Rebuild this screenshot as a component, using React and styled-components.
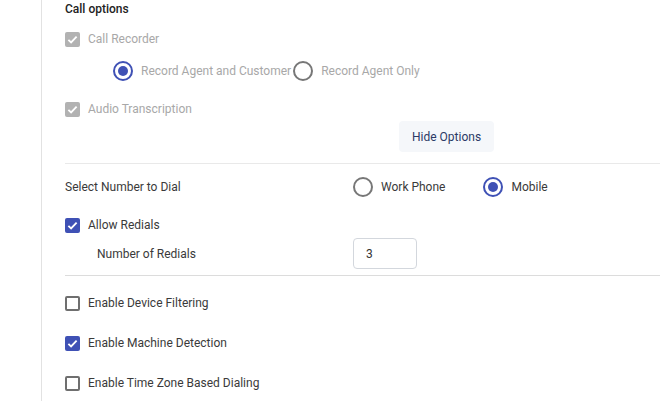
import React from 'react';
import styled, { createGlobalStyle } from 'styled-components';

const Global = createGlobalStyle`
  html, body {
    margin: 0;
    padding: 0;
    background: #fff;
    font-family: Roboto, "Liberation Sans", Arial, sans-serif;
    font-size: 12px;
    color: #333;
  }
`;

const Page = styled.div`
  padding-left: 41px;
  height: 401px;
  overflow: hidden;
`;

const Panel = styled.div`
  border-left: 1px solid #e2e2e2;
  padding-left: 23px;
  height: 100%;
  display: flex;
  flex-direction: column;
`;

const Title = styled.div`
  height: 18px;
  display: flex;
  align-items: center;
  font-weight: 500;
  color: #222;
`;

const Row = styled.div`
  display: flex;
  align-items: center;
  height: ${p => p.$h || 20}px;
  margin-top: ${p => p.$mt || 0}px;
  padding-left: ${p => p.$indent || 0}px;
`;

const Grid = styled.div`
  display: grid;
  grid-template-columns: 288px 1fr;
  align-items: center;
  height: ${p => p.$h || 24}px;
  margin-top: ${p => p.$mt || 0}px;
`;

const Label = styled.span`
  color: ${p => (p.$disabled ? '#a8a8a8' : '#3a3a3a')};
  padding-left: ${p => p.$indent || 0}px;
  white-space: nowrap;
`;

const Box = styled.span`
  box-sizing: border-box;
  width: 15px;
  height: 15px;
  border-radius: 2px;
  margin-right: 8px;
  display: inline-flex;
  align-items: center;
  justify-content: center;
  flex: none;
  background: ${p => (p.$checked ? (p.$disabled ? '#b2b2b2' : '#3f51b5') : '#fff')};
  border: ${p => (p.$checked ? 'none' : '2px solid #6f6f6f')};
`;

const Circle = styled.span`
  box-sizing: border-box;
  width: 20px;
  height: 20px;
  border-radius: 50%;
  border: 2px solid ${p => (p.$checked ? '#3f51b5' : '#777')};
  display: inline-flex;
  align-items: center;
  justify-content: center;
  flex: none;
  margin-right: 8px;

  &::after {
    content: '';
    width: 10px;
    height: 10px;
    border-radius: 50%;
    background: ${p => (p.$checked ? '#3f51b5' : 'transparent')};
  }
`;

const Option = styled.label`
  display: inline-flex;
  align-items: center;
  margin-right: ${p => p.$gap || 0}px;
`;

const Divider = styled.div`
  height: 1px;
  background: ${p => (p.$dark ? '#dcdcdc' : '#e9e9e9')};
  margin-top: ${p => p.$mt || 0}px;
  margin-right: -10px;
`;

const Button = styled.button`
  margin-left: 334px;
  height: 31px;
  padding: 0 13px;
  border: none;
  border-radius: 4px;
  background: #f5f7fa;
  color: #2c3a66;
  font-family: inherit;
  font-size: 12px;
`;

const Input = styled.input`
  box-sizing: border-box;
  width: 64px;
  height: 31px;
  border: 1px solid #d3d7dd;
  border-radius: 4px;
  padding: 0 12px;
  font-family: inherit;
  font-size: 12px;
  color: #333;
  outline: none;
`;

const Check = ({ checked, disabled, label, mt }) => (
  <Row $mt={mt}>
    <Box $checked={checked} $disabled={disabled}>
      {checked && (
        <svg width="13" height="13" viewBox="0 0 12 12">
          <polyline points="2.2,6.3 4.7,8.7 9.8,3.4" fill="none" stroke="#fff" strokeWidth="1.7" />
        </svg>
      )}
    </Box>
    <Label $disabled={disabled}>{label}</Label>
  </Row>
);

const Radio = ({ checked, disabled, label, gap }) => (
  <Option $gap={gap}>
    <Circle $checked={checked} />
    <Label $disabled={disabled}>{label}</Label>
  </Option>
);

export default function App() {
  return (
    <Page>
      <Global />
      <Panel>
        <Title>Call options</Title>
        <Check mt={11} checked disabled label="Call Recorder" />
        <Row $mt={10} $h={24} $indent={48}>
          <Radio checked disabled label="Record Agent and Customer" gap={2} />
          <Radio disabled label="Record Agent Only" />
        </Row>
        <Check mt={16} checked disabled label="Audio Transcription" />
        <Row $mt={2} $h={31}>
          <Button>Hide Options</Button>
        </Row>
        <Divider $mt={11} />
        <Grid $mt={11}>
          <Label>Select Number to Dial</Label>
          <div>
            <Radio label="Work Phone" gap={38} />
            <Radio checked label="Mobile" />
          </div>
        </Grid>
        <Check mt={16} checked label="Allow Redials" />
        <Grid $mt={3} $h={31}>
          <Label $indent={32}>Number of Redials</Label>
          <div>
            <Input defaultValue="3" />
          </div>
        </Grid>
        <Divider $mt={6} $dark />
        <Check mt={17} label="Enable Device Filtering" />
        <Check mt={20} checked label="Enable Machine Detection" />
        <Check mt={20} label="Enable Time Zone Based Dialing" />
      </Panel>
    </Page>
  );
}
